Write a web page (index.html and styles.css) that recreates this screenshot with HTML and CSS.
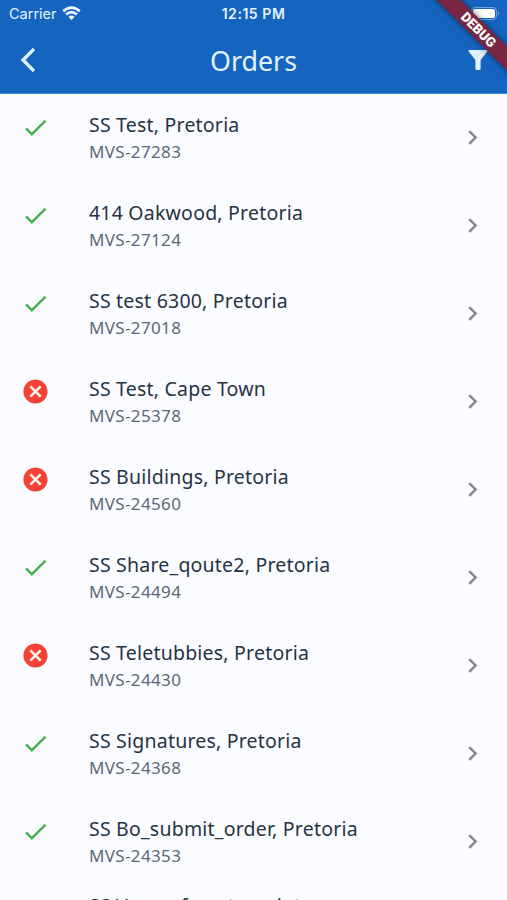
FILE: index.html
```html
<!DOCTYPE html>
<html lang="en">
<head>
<meta charset="utf-8">
<title>Orders</title>
<link rel="stylesheet" href="styles.css">
</head>
<body>
<svg class="defs" aria-hidden="true">
  <symbol id="check" viewBox="0 0 24 24"><path d="M9 16.17 4.83 12l-1.42 1.41L9 19 21 7l-1.41-1.41z"/></symbol>
  <symbol id="cancel" viewBox="0 0 24 24"><path d="M12 2C6.47 2 2 6.47 2 12s4.47 10 10 10 10-4.47 10-10S17.53 2 12 2zm5 13.59L15.59 17 12 13.41 8.41 17 7 15.59 10.59 12 7 8.41 8.41 7 12 10.59 15.59 7 17 8.41 13.41 12 17 15.59z"/></symbol>
  <symbol id="chevron" viewBox="0 0 24 24"><path d="M10 6 8.59 7.41 13.17 12l-4.58 4.59L10 18l6-6z"/></symbol>
</svg>
<header class="header">
  <div class="status">
    <div class="carrier"><span>Carrier</span>
      <svg class="wifi" viewBox="0 0 18 14"><path d="M1 5Q9-2 17 5M3.8 8.2Q9 3.8 14.2 8.2"/><path class="dot" d="M9 13.6 6 10.4Q9 8 12 10.4z"/></svg>
    </div>
    <div class="time">12:15 PM</div>
    <svg class="battery" viewBox="0 0 30 14"><rect class="case" x=".5" y=".5" width="25" height="12" rx="3.5"/><rect class="level" x="2" y="2" width="22" height="9" rx="2"/><path class="nub" d="M27 4.3q2.4 2.2 0 4.4z"/></svg>
  </div>
  <div class="bar">
    <svg class="back" viewBox="0 0 16 26"><path d="M14 2 3 13l11 11"/></svg>
    <h1>Orders</h1>
    <svg class="filter" viewBox="0 0 20 20"><path d="M1 0h18q1 .5.3 1.5L12.6 10v9q0 1-1 1H8.4q-1 0-1-1v-9L.7 1.5Q0 .5 1 0z"/></svg>
  </div>
  <div class="ribbon">DEBUG</div>
</header>
<main class="list">
  <div class="row"><svg class="state ok"><use href="#check"/></svg><div class="text"><h2>SS Test, Pretoria</h2><p>MVS-27283</p></div><svg class="go"><use href="#chevron"/></svg></div>
  <div class="row"><svg class="state ok"><use href="#check"/></svg><div class="text"><h2>414 Oakwood, Pretoria</h2><p>MVS-27124</p></div><svg class="go"><use href="#chevron"/></svg></div>
  <div class="row"><svg class="state ok"><use href="#check"/></svg><div class="text"><h2>SS test 6300, Pretoria</h2><p>MVS-27018</p></div><svg class="go"><use href="#chevron"/></svg></div>
  <div class="row"><svg class="state bad"><use href="#cancel"/></svg><div class="text"><h2>SS Test, Cape Town</h2><p>MVS-25378</p></div><svg class="go"><use href="#chevron"/></svg></div>
  <div class="row"><svg class="state bad"><use href="#cancel"/></svg><div class="text"><h2>SS Buildings, Pretoria</h2><p>MVS-24560</p></div><svg class="go"><use href="#chevron"/></svg></div>
  <div class="row"><svg class="state ok"><use href="#check"/></svg><div class="text"><h2>SS Share_qoute2, Pretoria</h2><p>MVS-24494</p></div><svg class="go"><use href="#chevron"/></svg></div>
  <div class="row"><svg class="state bad"><use href="#cancel"/></svg><div class="text"><h2>SS Teletubbies, Pretoria</h2><p>MVS-24430</p></div><svg class="go"><use href="#chevron"/></svg></div>
  <div class="row"><svg class="state ok"><use href="#check"/></svg><div class="text"><h2>SS Signatures, Pretoria</h2><p>MVS-24368</p></div><svg class="go"><use href="#chevron"/></svg></div>
  <div class="row"><svg class="state ok"><use href="#check"/></svg><div class="text"><h2>SS Bo_submit_order, Pretoria</h2><p>MVS-24353</p></div><svg class="go"><use href="#chevron"/></svg></div>
  <div class="row tall"><div class="state"></div><div class="text"><h2>SS Vesna_fore_tens_int</h2></div></div>
</main>
</body>
</html>
```

FILE: styles.css
```css
* { box-sizing: border-box; }
body {
  margin: 0;
  height: 900px;
  overflow: hidden;
  display: flex;
  flex-direction: column;
  background: #fbfcff;
  font-family: "Noto Sans", sans-serif;
}
h1, h2, p { margin: 0; font-weight: 400; }
svg { display: block; }
.defs { display: none; }
.header {
  position: relative;
  flex: none;
  height: 94px;
  overflow: hidden;
  background: #1565c0;
  color: #e3f2ff;
  border-bottom: 1px solid #4384cc;
}
.status {
  height: 27px;
  display: grid;
  grid-template-columns: 1fr auto 1fr;
  align-items: center;
  padding: 0 6px 0 9px;
  font: 14.5px/27px Inter, sans-serif;
}
.carrier { display: flex; align-items: center; gap: 5px; }
.wifi { width: 19px; height: 14.5px; fill: none; stroke: #f2f9ff; stroke-width: 2.5; }
.wifi .dot { fill: #f2f9ff; stroke: none; }
.time { font-weight: 600; font-size: 14px; letter-spacing: .55px; margin-left: -3px; }
.battery { width: 30px; height: 14px; justify-self: end; }
.case { fill: none; stroke: #73a3da; }
.level { fill: #fff; }
.nub { fill: #73a3da; }
.bar {
  height: 66px;
  display: grid;
  grid-template-columns: 1fr auto 1fr;
  align-items: center;
  padding: 0 19px 0 20px;
}
.back { width: 16px; height: 26px; fill: none; stroke: #e3f2ff; stroke-width: 3.3; }
h1 { font-size: 26.8px; line-height: 36px; padding-top: 2px; margin-left: -1px; }
.filter { width: 20px; height: 20px; justify-self: end; fill: #e3f2ff; }
.ribbon {
  position: absolute;
  left: 408px;
  top: 21px;
  width: 140px;
  height: 17px;
  transform: rotate(45deg);
  background: #772744;
  color: #fff;
  text-align: center;
  text-indent: 1px;
  font: 900 13.5px/17px Roboto, sans-serif;
  box-shadow: 0 0 7px rgba(0, 0, 0, .5);
}
.row { height: 88px; display: flex; padding: 17px 20px 0 20.5px; }
.tall { padding-top: 6px; }
.state { width: 29px; height: 29px; margin-top: 2px; flex: none; }
.ok { fill: #4caf50; }
.bad { fill: #f44336; }
.text { flex: 1; margin-left: 39.5px; }
h2 { font-size: 19.5px; line-height: 27px; letter-spacing: .21px; color: #263343; white-space: nowrap; }
p { font-size: 17px; line-height: 28px; letter-spacing: .36px; color: #5c6878; }
.go { width: 29px; height: 29px; margin-top: 12px; fill: #858585; }
```
